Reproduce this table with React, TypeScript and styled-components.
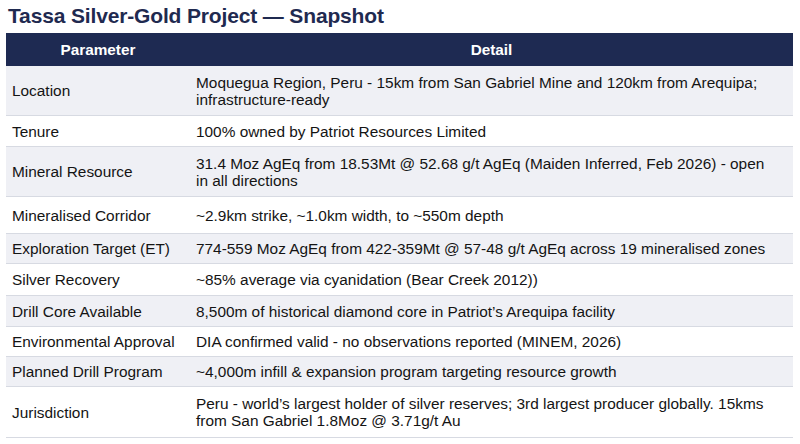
import React from "react";
import styled, { createGlobalStyle } from "styled-components";

const Global = createGlobalStyle`
  html, body { margin: 0; padding: 0; background: #ffffff; }
  body { font-family: "Liberation Sans", Arial, sans-serif; }
`;

const Page = styled.div`
  width: 800px;
  height: 444px;
  box-sizing: border-box;
  padding: 4px 7px 0 6px;
  background: #ffffff;
`;

const Title = styled.h1`
  margin: 0 0 5px 2px;
  font-size: 21px;
  line-height: 24px;
  font-weight: 700;
  color: #1f2a50;
  letter-spacing: -0.15px;
`;

const Table = styled.div`
  display: flex;
  flex-direction: column;
`;

const Row = styled.div<{ $h: number; $shade?: boolean; $head?: boolean }>`
  display: grid;
  grid-template-columns: 184px 1fr;
  align-items: center;
  box-sizing: border-box;
  height: ${(p) => p.$h}px;
  background: ${(p) => (p.$head ? "#1e2a52" : p.$shade ? "#eff0f5" : "#ffffff")};
  border-bottom: ${(p) => (p.$head ? "none" : "1.5px solid #d7dae2")};
`;

const HeadCell = styled.div`
  text-align: center;
  color: #ffffff;
  font-weight: 700;
  font-size: 15.3px;
  line-height: 17px;
`;

const Cell = styled.div`
  padding-left: 6px;
  color: #141414;
  font-size: 15.4px;
  line-height: 17px;
`;

const Line = styled.span`
  display: block;
  white-space: nowrap;
`;

const rows: { p: string; d: string[]; h: number }[] = [
  { p: "Location", d: ["Moquegua Region, Peru - 15km from San Gabriel Mine and 120km from Arequipa;", "infrastructure-ready"], h: 50 },
  { p: "Tenure", d: ["100% owned by Patriot Resources Limited"], h: 31 },
  { p: "Mineral Resource", d: ["31.4 Moz AgEq from 18.53Mt @ 52.68 g/t AgEq (Maiden Inferred, Feb 2026) - open", "in all directions"], h: 50 },
  { p: "Mineralised Corridor", d: ["~2.9km strike, ~1.0km width, to ~550m depth"], h: 37 },
  { p: "Exploration Target (ET)", d: ["774-559 Moz AgEq from 422-359Mt @ 57-48 g/t AgEq across 19 mineralised zones"], h: 30 },
  { p: "Silver Recovery", d: ["~85% average via cyanidation (Bear Creek 2012))"], h: 32 },
  { p: "Drill Core Available", d: ["8,500m of historical diamond core in Patriot\u2019s Arequipa facility"], h: 31 },
  { p: "Environmental Approval", d: ["DIA confirmed valid - no observations reported (MINEM, 2026)"], h: 30 },
  { p: "Planned Drill Program", d: ["~4,000m infill & expansion program targeting resource growth"], h: 30 },
  { p: "Jurisdiction", d: ["Peru - world\u2019s largest holder of silver reserves; 3rd largest producer globally. 15kms", "from San Gabriel 1.8Moz @ 3.71g/t Au"], h: 51 },
];

export default function App() {
  return (
    <Page>
      <Global />
      <Title>Tassa Silver-Gold Project — Snapshot</Title>
      <Table>
        <Row $h={33} $head>
          <HeadCell>Parameter</HeadCell>
          <HeadCell>Detail</HeadCell>
        </Row>
        {rows.map((r, i) => (
          <Row key={r.p} $h={r.h} $shade={i % 2 === 0}>
            <Cell>{r.p}</Cell>
            <Cell>
              {r.d.map((l) => (
                <Line key={l}>{l}</Line>
              ))}
            </Cell>
          </Row>
        ))}
      </Table>
    </Page>
  );
}
